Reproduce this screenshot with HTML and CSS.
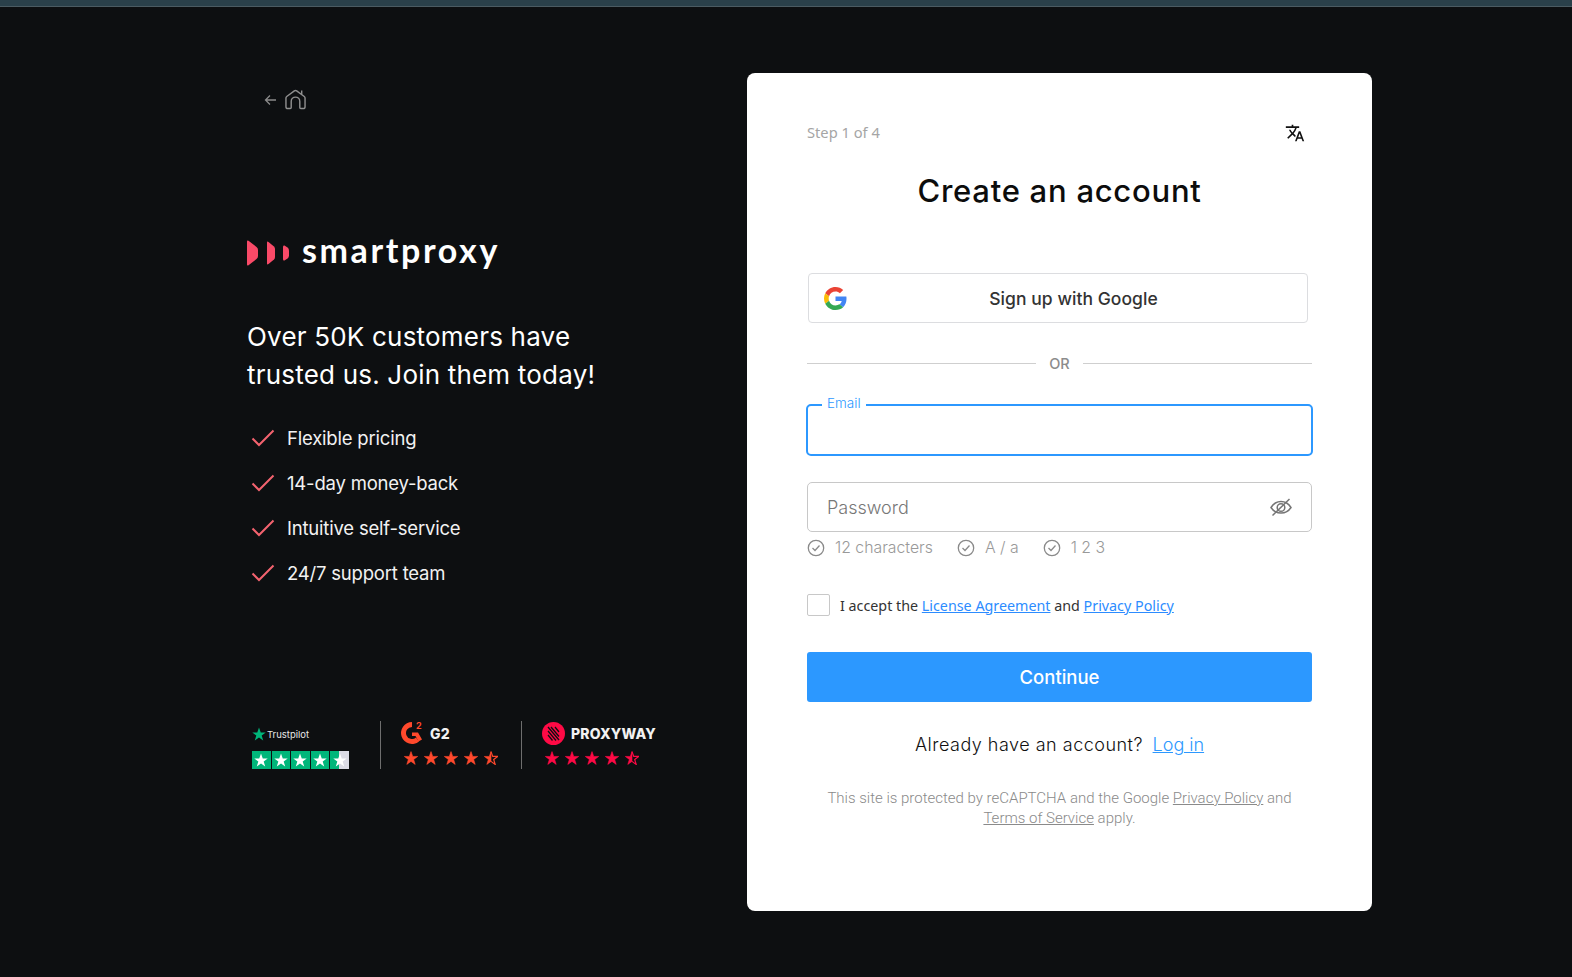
FILE: index.html
```html
<!DOCTYPE html>
<html lang="en">
<head>
<meta charset="utf-8">
<title>Create an account</title>
<link rel="stylesheet" href="styles.css">
</head>
<body>
<div class="topbar"></div>
<main class="page">
  <section class="intro">
    <nav class="back">
      <svg class="back-arrow" width="13" height="12" viewBox="0 0 13 12"><path d="M12 6H1.500M6 1.500 1.500 6 6 10.500" fill="none" stroke="#8a8a8a" stroke-width="1.300"/></svg>
      <svg class="back-home" width="21" height="21" viewBox="0 0 22 22"><path d="M3 20.500h2.500a1 1 0 0 0 1-1V13a4.500 4.500 0 0 1 9 0v6.500a1 1 0 0 0 1 1H19a2 2 0 0 0 2-2V9.500a2 2 0 0 0-.8-1.600L12.200 2a2 2 0 0 0-2.400 0L1.800 7.900A2 2 0 0 0 1 9.500v9a2 2 0 0 0 2 2ZM17.500 1.500v4" fill="none" stroke="#8f8f8f" stroke-width="1.500" stroke-linejoin="round"/></svg>
    </nav>
    <div class="logo">
      <svg width="43" height="26" viewBox="0 0 43 26"><path d="M0 1.500Q0 0 1.500 .7L9.500 7Q11 8 11 10v6q0 2-1.500 3L1.500 25.300Q0 26 0 24.500Z" fill="#f94a68"/><path d="M20 2.500Q20 1 21.500 2L27 6.500Q28 7.500 28 9v8q0 1.500-1 2.500L21.500 24Q20 25 20 23.500Z" fill="#f94a68"/><path d="M36 7Q36 5 37.500 5.600L40.500 7.500Q42 8.500 42 10.500v5q0 2-1.500 3L37.500 20.400Q36 21 36 19Z" fill="#f94a68"/></svg>
      <span class="logo-name">smartproxy</span>
    </div>
    <h2 class="pitch">Over 50K customers have<br>trusted us. Join them today!</h2>
    <ul class="perks">
      <li class="perk"><svg width="24" height="18" viewBox="0 0 24 18"><path d="M1.500 9.500 8 16 22.500 1.500" fill="none" stroke="#f4636f" stroke-width="2"/></svg>Flexible pricing</li>
      <li class="perk"><svg width="24" height="18" viewBox="0 0 24 18"><path d="M1.500 9.500 8 16 22.500 1.500" fill="none" stroke="#f4636f" stroke-width="2"/></svg>14-day money-back</li>
      <li class="perk"><svg width="24" height="18" viewBox="0 0 24 18"><path d="M1.500 9.500 8 16 22.500 1.500" fill="none" stroke="#f4636f" stroke-width="2"/></svg>Intuitive self-service</li>
      <li class="perk"><svg width="24" height="18" viewBox="0 0 24 18"><path d="M1.500 9.500 8 16 22.500 1.500" fill="none" stroke="#f4636f" stroke-width="2"/></svg>24/7 support team</li>
    </ul>
    <div class="ratings">
      <div class="rating rating-tp">
        <div class="tp-name"><svg width="14" height="14" viewBox="0 0 24 24"><path d="m12 1 3 8.300h8.500l-6.900 5.200 2.600 8.500L12 17.800 4.800 23l2.600-8.500L.5 9.300H9Z" fill="#00b67a"/></svg><span>Trustpilot</span></div>
        <div class="tp-stars">
          <span class="tp-star"><svg width="14" height="14" viewBox="0 0 24 24"><path d="m12 1 3 8.300h8.500l-6.900 5.200 2.600 8.500L12 17.800 4.800 23l2.600-8.500L.5 9.300H9Z" fill="#fff"/></svg></span>
          <span class="tp-star"><svg width="14" height="14" viewBox="0 0 24 24"><path d="m12 1 3 8.300h8.500l-6.900 5.200 2.600 8.500L12 17.800 4.800 23l2.600-8.500L.5 9.300H9Z" fill="#fff"/></svg></span>
          <span class="tp-star"><svg width="14" height="14" viewBox="0 0 24 24"><path d="m12 1 3 8.300h8.500l-6.900 5.200 2.600 8.500L12 17.800 4.800 23l2.600-8.500L.5 9.300H9Z" fill="#fff"/></svg></span>
          <span class="tp-star"><svg width="14" height="14" viewBox="0 0 24 24"><path d="m12 1 3 8.300h8.500l-6.900 5.200 2.600 8.500L12 17.800 4.800 23l2.600-8.500L.5 9.300H9Z" fill="#fff"/></svg></span>
          <span class="tp-star tp-part"><svg width="14" height="14" viewBox="0 0 24 24"><path d="m12 1 3 8.300h8.500l-6.900 5.200 2.600 8.500L12 17.800 4.800 23l2.600-8.500L.5 9.300H9Z" fill="#fff"/></svg></span>
        </div>
      </div>
      <div class="rating rating-g2">
        <div class="brand">
          <svg width="23" height="24" viewBox="0 0 23 24"><path d="M18 20.500A11 11 0 1 1 11 1V6A6 6 0 1 0 15 16.500Z" fill="#ff492c"/><path d="M11 11.500h6l4 7-3.500 2-3-5.500H11Z" fill="#ff492c"/><text x="15" y="7.500" class="g2-sup">2</text></svg>
          <span class="brand-name">G2</span>
        </div>
        <div class="stars stars-g2">
          <svg width="14" height="14" viewBox="0 0 24 24"><path d="m12 1 3 8.300h8.500l-6.900 5.200 2.600 8.500L12 17.800 4.800 23l2.600-8.500L.5 9.300H9Z"/></svg>
          <svg width="14" height="14" viewBox="0 0 24 24"><path d="m12 1 3 8.300h8.500l-6.900 5.200 2.600 8.500L12 17.800 4.800 23l2.600-8.500L.5 9.300H9Z"/></svg>
          <svg width="14" height="14" viewBox="0 0 24 24"><path d="m12 1 3 8.300h8.500l-6.900 5.200 2.600 8.500L12 17.800 4.800 23l2.600-8.500L.5 9.300H9Z"/></svg>
          <svg width="14" height="14" viewBox="0 0 24 24"><path d="m12 1 3 8.300h8.500l-6.900 5.200 2.600 8.500L12 17.800 4.800 23l2.600-8.500L.5 9.300H9Z"/></svg>
          <svg width="14" height="14" viewBox="0 0 24 24"><path d="m12 1v16.800L4.800 23l2.600-8.500L.5 9.300H9Z"/><path class="half" d="m12 1 3 8.300h8.500l-6.900 5.200 2.600 8.500L12 17.800"/></svg>
        </div>
      </div>
      <div class="rating rating-pw">
        <div class="brand">
          <svg width="23" height="23" viewBox="0 0 23 23"><circle cx="11.500" cy="11.500" r="11.500" fill="#ff0a45"/><path d="M6 5l11 13M6 9l8 9.500M9 5l8 9.500M6 13l4.500 5.500M13 5l4 5" stroke="#0d0f12" stroke-width="1.300" fill="none"/></svg>
          <span class="brand-name">PROXYWAY</span>
        </div>
        <div class="stars stars-pw">
          <svg width="14" height="14" viewBox="0 0 24 24"><path d="m12 1 3 8.300h8.500l-6.900 5.200 2.600 8.500L12 17.800 4.800 23l2.600-8.500L.5 9.300H9Z"/></svg>
          <svg width="14" height="14" viewBox="0 0 24 24"><path d="m12 1 3 8.300h8.500l-6.900 5.200 2.600 8.500L12 17.800 4.800 23l2.600-8.500L.5 9.300H9Z"/></svg>
          <svg width="14" height="14" viewBox="0 0 24 24"><path d="m12 1 3 8.300h8.500l-6.900 5.200 2.600 8.500L12 17.800 4.800 23l2.600-8.500L.5 9.300H9Z"/></svg>
          <svg width="14" height="14" viewBox="0 0 24 24"><path d="m12 1 3 8.300h8.500l-6.900 5.200 2.600 8.500L12 17.800 4.800 23l2.600-8.500L.5 9.300H9Z"/></svg>
          <svg width="14" height="14" viewBox="0 0 24 24"><path d="m12 1v16.800L4.800 23l2.600-8.500L.5 9.300H9Z"/><path class="half" d="m12 1 3 8.300h8.500l-6.900 5.200 2.600 8.500L12 17.800"/></svg>
        </div>
      </div>
    </div>
  </section>

  <section class="card">
    <div class="card-top">
      <span class="step">Step 1 of 4</span>
      <svg class="translate" width="20" height="20" viewBox="0 0 24 24"><path d="m12.870 15.070-2.540-2.510.03-.03A17.520 17.520 0 0 0 14.070 6H17V4h-7V2H8v2H1v2h11.170C11.500 7.920 10.440 9.750 9 11.350 8.070 10.320 7.300 9.190 6.690 8h-2c.73 1.630 1.730 3.170 2.980 4.560l-5.090 5.020L4 19l5-5 3.110 3.110.76-2.040ZM18.500 10h-2L12 22h2l1.120-3h4.750L21 22h2l-4.500-12Zm-2.620 7 1.620-4.330L19.120 17h-3.240Z" fill="#111"/></svg>
    </div>
    <h1 class="title">Create an account</h1>
    <button class="google" type="button">
      <svg class="google-g" width="23" height="23" viewBox="0 0 48 48"><path fill="#EA4335" d="M24 9.500c3.540 0 6.710 1.220 9.210 3.600l6.850-6.850C35.900 2.380 30.470 0 24 0 14.620 0 6.510 5.380 2.560 13.220l7.980 6.190C12.430 13.720 17.740 9.500 24 9.500z"/><path fill="#4285F4" d="M46.980 24.550c0-1.570-.15-3.090-.38-4.550H24v9.020h12.940c-.58 2.960-2.260 5.480-4.780 7.180l7.730 6c4.510-4.180 7.090-10.360 7.090-17.650z"/><path fill="#FBBC05" d="M10.530 28.590c-.48-1.450-.76-2.990-.76-4.590s.27-3.140.76-4.590l-7.980-6.190C.92 16.460 0 20.120 0 24c0 3.880.92 7.540 2.560 10.780l7.970-6.190z"/><path fill="#34A853" d="M24 48c6.480 0 11.930-2.130 15.890-5.810l-7.730-6c-2.150 1.450-4.920 2.300-8.160 2.300-6.260 0-11.570-4.220-13.470-9.910l-7.980 6.190C6.510 42.620 14.620 48 24 48z"/></svg>
      <span class="google-label">Sign up with Google</span>
    </button>
    <div class="or"><span>OR</span></div>
    <div class="field field-active">
      <span class="field-label">Email</span>
    </div>
    <div class="field field-pass">
      <span class="placeholder">Password</span>
      <svg width="24" height="20" viewBox="0 0 24 20"><g fill="none" stroke="#757575" stroke-width="1.500"><path d="M2 10.500C4.500 6.500 8 4.500 12 4.500s7.500 2 10 6c-2.500 4-6 5.500-10 5.500s-7.500-1.500-10-5.500Z"/><circle cx="12" cy="10.500" r="3.800"/><path d="M3.500 18.500 20.500 2"/></g></svg>
    </div>
    <div class="rules">
      <span class="rule"><svg width="18" height="18" viewBox="0 0 18 18"><circle cx="9" cy="9" r="7.700" fill="none" stroke="#8a8a8a" stroke-width="1.300"/><path d="m5.500 9 2.500 2.500 4.500-5" fill="none" stroke="#8a8a8a" stroke-width="1.300"/></svg>12 characters</span>
      <span class="rule"><svg width="18" height="18" viewBox="0 0 18 18"><circle cx="9" cy="9" r="7.700" fill="none" stroke="#8a8a8a" stroke-width="1.300"/><path d="m5.500 9 2.500 2.500 4.500-5" fill="none" stroke="#8a8a8a" stroke-width="1.300"/></svg>A / a</span>
      <span class="rule"><svg width="18" height="18" viewBox="0 0 18 18"><circle cx="9" cy="9" r="7.700" fill="none" stroke="#8a8a8a" stroke-width="1.300"/><path d="m5.500 9 2.500 2.500 4.500-5" fill="none" stroke="#8a8a8a" stroke-width="1.300"/></svg>1 2 3</span>
    </div>
    <div class="accept">
      <span class="checkbox"></span>
      <span>I accept the <a href="#">License Agreement</a> and <a href="#">Privacy Policy</a></span>
    </div>
    <button class="continue" type="button">Continue</button>
    <p class="login">Already have an account? <a href="#">Log in</a></p>
    <p class="legal">This site is protected by reCAPTCHA and the Google <a href="#">Privacy Policy</a> and<br><a href="#">Terms of Service</a> apply.</p>
  </section>
</main>
</body>
</html>
```

FILE: styles.css
```css
* { box-sizing: border-box; }
html, body { margin: 0; height: 100%; }
body {
  background: #0d0f11;
  font-family: Inter, "Liberation Sans", sans-serif;
  overflow: hidden;
}
a { color: inherit; }
.topbar {
  height: 7px;
  background: #2a404a;
  border-bottom: 1px solid #4b5b62;
}
.page {
  display: flex;
  padding: 66px 0 0 247px;
}
.intro { width: 500px; }
.back {
  display: flex;
  align-items: center;
  gap: 8px;
  padding: 15px 0 0 17px;
  height: 39px;
}
.back-home { margin-top: -2px; }
.logo {
  display: flex;
  align-items: center;
  gap: 12px;
  margin-top: 125px;
  height: 32px;
}
.logo-name {
  position: relative;
  top: -3px;
  font-family: Lato, sans-serif;
  font-weight: 700;
  font-size: 34px;
  line-height: 32px;
  letter-spacing: 2.600px;
  color: #fff;
}
.pitch {
  margin: 49px 0 0;
  font-size: 26px;
  font-weight: 400;
  line-height: 38px;
  letter-spacing: .2px;
  color: #fff;
}
.perks {
  list-style: none;
  margin: 21px 0 0;
  padding: 0 0 0 4px;
}
.perk {
  display: flex;
  align-items: center;
  gap: 12px;
  height: 45px;
  font-size: 18.500px;
  letter-spacing: -.2px;
  color: #f2f2f2;
}
.ratings {
  display: flex;
  align-items: stretch;
  margin: 126px 0 0 5px;
  height: 48px;
}
.rating-tp { width: 129px; padding-top: 6px; border-right: 1px solid #6e6e6e; }
.tp-name {
  display: flex;
  align-items: center;
  gap: 1px;
  font-size: 9.500px;
  color: #e8e8e8;
  height: 14px;
}
.tp-stars { display: flex; gap: 1px; margin-top: 10px; }
.tp-star {
  display: flex;
  align-items: center;
  justify-content: center;
  width: 18.600px;
  height: 18px;
  background: #00b67a;
}
.tp-part { background: linear-gradient(90deg, #00b67a 50%, #dcdce6 50%); }
.rating-g2 { width: 141px; padding-left: 20px; border-right: 1px solid #6e6e6e; }
.rating-pw { padding-left: 20px; }
.brand { display: flex; align-items: center; gap: 6px; height: 24px; }
.brand-name {
  font-weight: 800;
  font-size: 14px;
  letter-spacing: .2px;
  color: #f2f2f2;
}
.g2-sup { font: 700 9px Inter, sans-serif; fill: #ff492c; }
.stars { display: flex; gap: 6px; margin-top: 6px; padding-left: 3px; }
.stars-g2 svg { fill: #ff492c; stroke: #ff492c; }
.stars-pw svg { fill: #ff0a45; stroke: #ff0a45; }
.stars .half { fill: none; stroke-width: 2; }

.card {
  width: 625px;
  height: 838px;
  padding: 48px 60px 0;
  background: #fff;
  border-radius: 8px;
  color: #111;
}
.card-top {
  display: flex;
  justify-content: space-between;
  align-items: center;
  height: 22px;
  padding-right: 7px;
}
.translate { margin-top: 2px; }
.step {
  font-family: "Noto Sans", sans-serif;
  font-size: 14.700px;
  color: #a5a5a5;
}
.title {
  margin: 28px 0 0;
  height: 40px;
  font-size: 31px;
  line-height: 40px;
  font-weight: 500;
  letter-spacing: .75px;
  text-align: center;
  color: #0c0c0c;
}
.google {
  display: flex;
  align-items: center;
  width: 500px;
  height: 50px;
  margin: 62px 0 0 1px;
  padding: 0 15px;
  background: #fff;
  border: 1px solid #dcdde0;
  border-radius: 4px;
  font-family: inherit;
}
.google-label {
  flex: 1;
  padding-left: 8px;
  text-align: center;
  font-size: 17.500px;
  font-weight: 500;
  letter-spacing: .05px;
  color: #333;
}
.or {
  display: flex;
  align-items: center;
  gap: 13px;
  margin-top: 28px;
  height: 24px;
  font-size: 14.500px;
  font-weight: 500;
  color: #8c8c8c;
}
.or::before, .or::after {
  content: "";
  flex: 1;
  height: 1px;
  background: #cfcfcf;
}
.field {
  position: relative;
  height: 50px;
  border: 1px solid #c8c8c8;
  border-radius: 5px;
}
.field-active {
  height: 52px;
  margin: 29px -1px 0;
  border: 2px solid #2c98ff;
}
.field-label {
  position: absolute;
  left: 14px;
  top: -10px;
  padding: 0 5px;
  background: #fff;
  font-size: 13.500px;
  font-weight: 300;
  line-height: 14px;
  color: #2c98ff;
}
.field-pass {
  display: flex;
  align-items: center;
  justify-content: space-between;
  margin-top: 26px;
  padding: 0 18px 0 19px;
  font-size: 18px;
  font-weight: 300;
  color: #777;
}
.rules {
  display: flex;
  align-items: center;
  gap: 24px;
  height: 31px;
  font-size: 15.800px;
  font-weight: 300;
  color: #999;
}
.rule { display: flex; align-items: center; gap: 10px; }
.accept {
  display: flex;
  align-items: center;
  gap: 10px;
  margin-top: 30px;
  height: 24px;
  font-family: "Noto Sans", sans-serif;
  font-size: 14.300px;
  color: #333;
}
.accept a { color: #2c8cff; }
.checkbox {
  width: 23px;
  height: 22px;
  border: 1px solid #c8c8c8;
  border-radius: 2px;
}
.continue {
  display: block;
  width: 100%;
  height: 50px;
  margin-top: 35px;
  background: #2c98ff;
  border: 0;
  border-radius: 3px;
  font-family: inherit;
  font-size: 18.500px;
  font-weight: 500;
  color: #fff;
}
.login {
  margin: 30px 0 0;
  line-height: 26px;
  text-align: center;
  font-size: 18px;
  letter-spacing: .5px;
  font-weight: 300;
  color: #111;
}
.login a { margin-left: 4px; color: #2c98ff; letter-spacing: 0; }
.legal {
  margin: 30px 0 0;
  text-align: center;
  font-family: Roboto, sans-serif;
  font-size: 15px;
  font-weight: 300;
  line-height: 20px;
  color: #8a8a8a;
}
```
